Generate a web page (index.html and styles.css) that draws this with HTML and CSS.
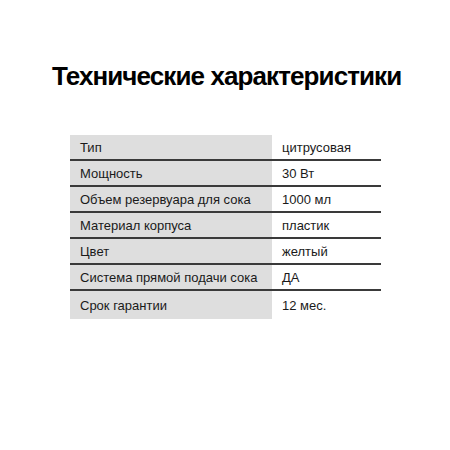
FILE: index.html
```html
<!DOCTYPE html>
<html lang="ru">
<head>
<meta charset="utf-8">
<link rel="stylesheet" href="styles.css">
</head>
<body>
<div class="page">
  <h1 class="title">Технические характеристики</h1>
  <table class="specs">
    <tr><td class="k">Тип</td><td class="v">цитрусовая</td></tr>
    <tr><td class="k">Мощность</td><td class="v">30 Вт</td></tr>
    <tr><td class="k">Объем резервуара для сока</td><td class="v">1000 мл</td></tr>
    <tr><td class="k">Материал корпуса</td><td class="v">пластик</td></tr>
    <tr><td class="k">Цвет</td><td class="v">желтый</td></tr>
    <tr><td class="k">Система прямой подачи сока</td><td class="v">ДА</td></tr>
    <tr><td class="k">Срок гарантии</td><td class="v">12 мес.</td></tr>
  </table>
</div>
</body>
</html>
```
FILE: styles.css
```css
html, body {
  margin: 0;
  padding: 0;
  background: #fff;
}
.page {
  width: 450px;
  height: 450px;
  font-family: "Liberation Sans", Arial, sans-serif;
  color: #1a1a1a;
  padding-top: 60px;
  box-sizing: border-box;
}
.title {
  margin: 0 0 0 52px;
  font-size: 26px;
  font-weight: bold;
  line-height: 32px;
  color: #000;
  white-space: nowrap;
  letter-spacing: -0.9px;
}
.specs {
  margin: 43px 0 0 70px;
  border-collapse: collapse;
  font-size: 13px;
}
.specs td {
  height: 24px;
  padding: 0 0 0 10px;
  border-bottom: 2px solid #3a3a3a;
  vertical-align: middle;
}
.specs tr:last-child td {
  border-bottom: none;
  height: 28px;
}
.specs .k {
  width: 192px;
  background: #dedede;
}
.specs .v {
  width: 99px;
  padding-left: 10px;
}
```
